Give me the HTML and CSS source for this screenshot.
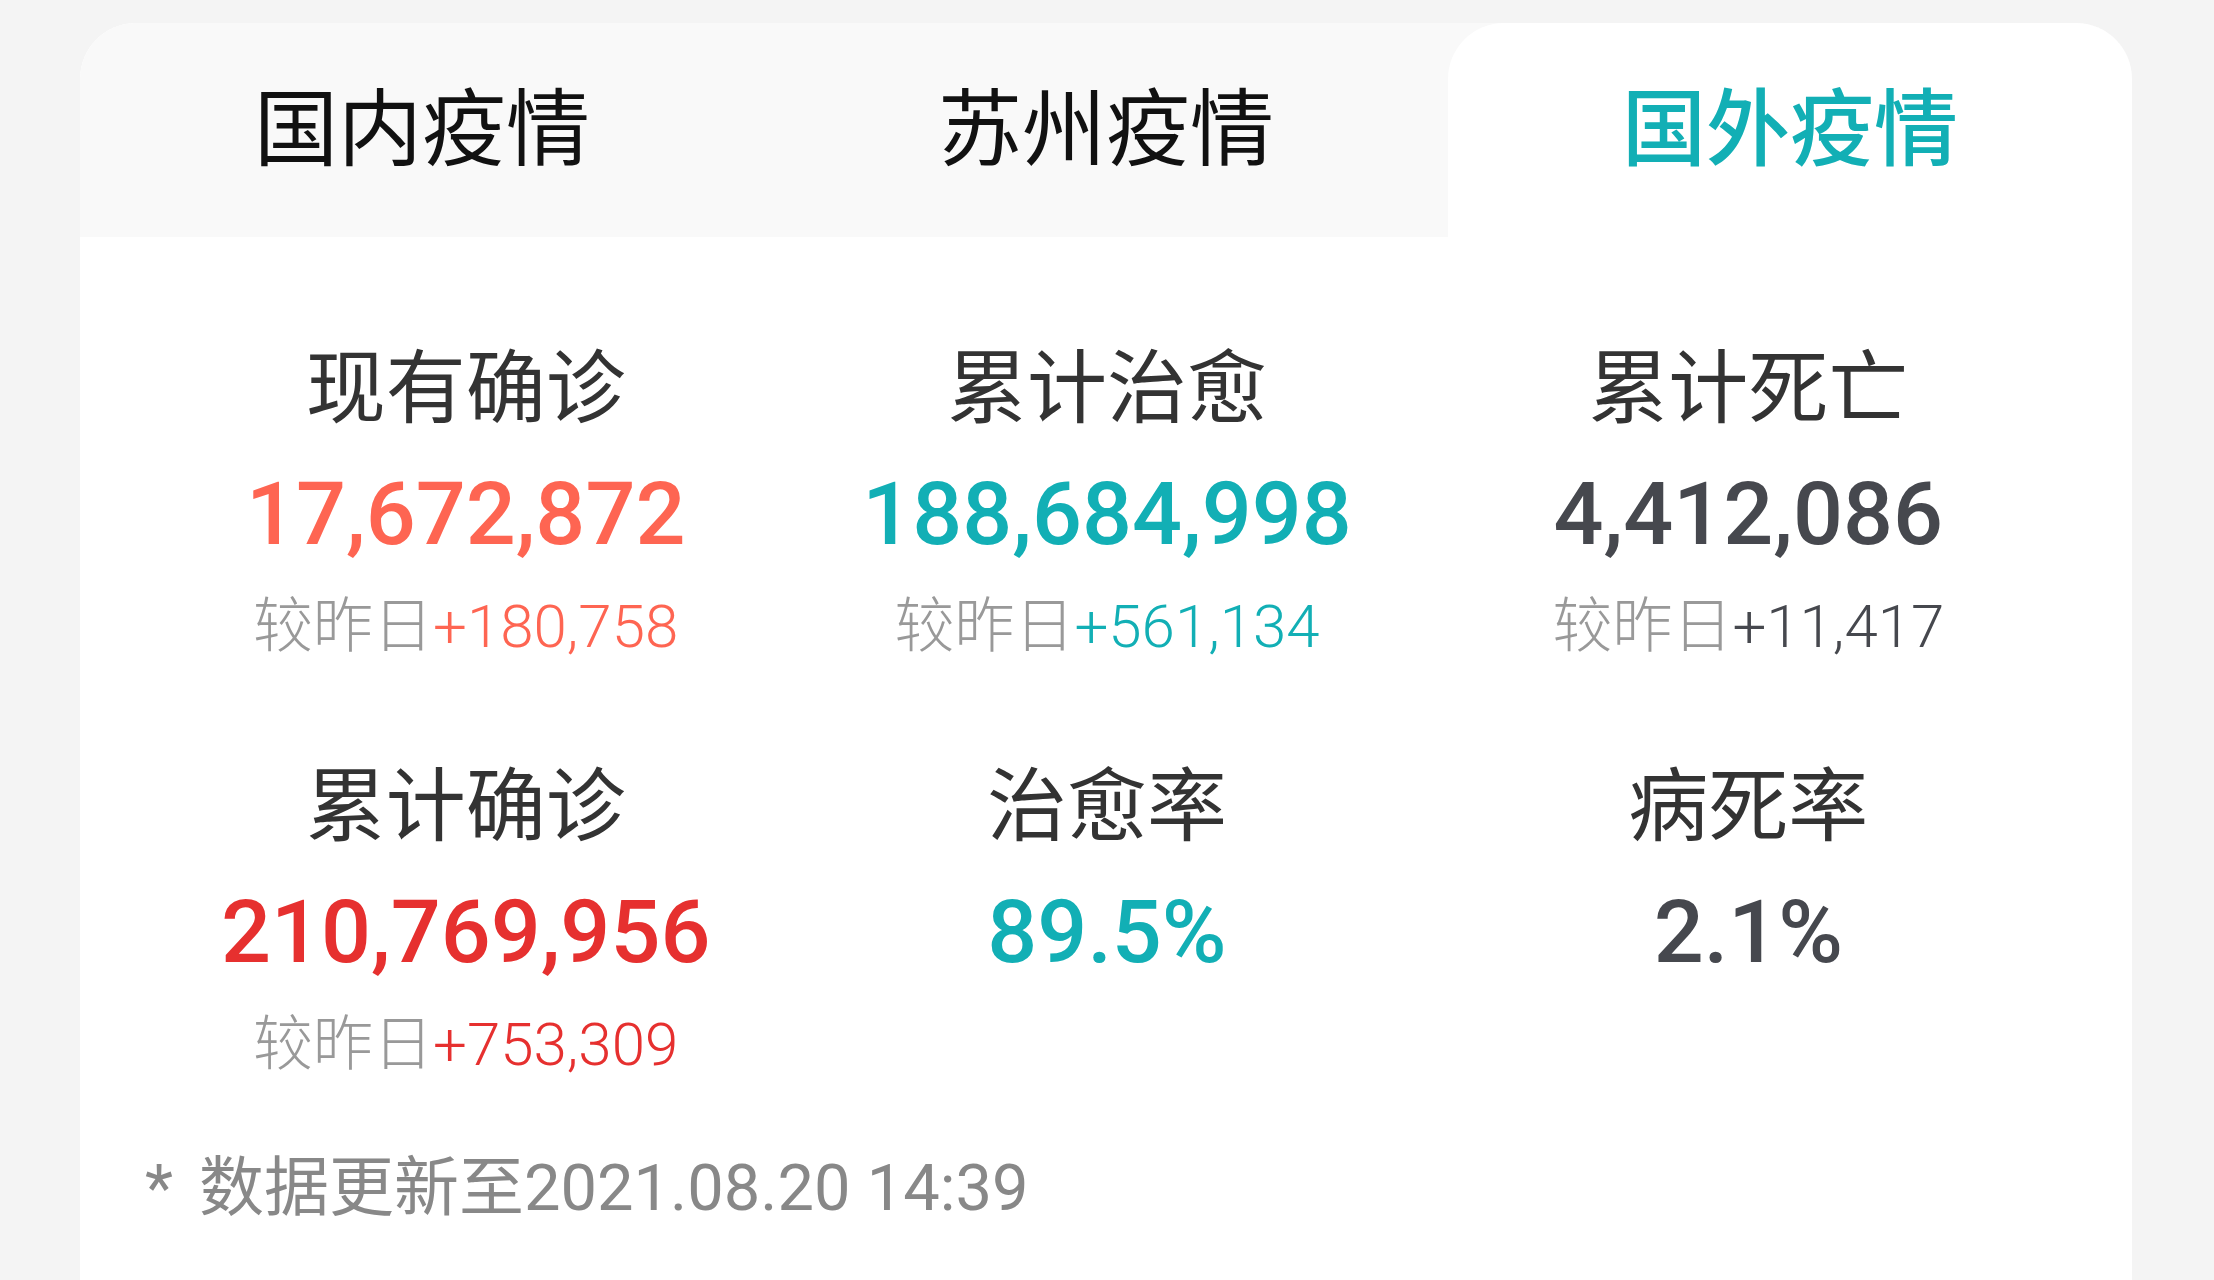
FILE: index.html
```html
<!DOCTYPE html>
<html>
<head>
	<meta charset="utf-8">
	<meta name="viewport" content="width=device-width, initial-scale=1">
	<title>疫情数据</title>
	<link rel="stylesheet" href="styles.css">
</head>
<body>
  <div class="main-div">
    <div class="card">
      <div class="tabs">
        <div class="tab">国内疫情</div>
        <div class="tab">苏州疫情</div>
        <div class="tab active">国外疫情</div>
      </div>

      <div class="stats">

        <div class="stat">
          <div class="label">现有确诊</div>
          <div class="num coral">17,672,872</div>
          <div class="diff">较昨日<span class="coral">+180,758</span></div>
        </div>

        <div class="stat">
          <div class="label">累计治愈</div>
          <div class="num teal">188,684,998</div>
          <div class="diff">较昨日<span class="teal">+561,134</span></div>
        </div>

        <div class="stat">
          <div class="label">累计死亡</div>
          <div class="num dark">4,412,086</div>
          <div class="diff">较昨日<span class="dark">+11,417</span></div>
        </div>

        <div class="stat">
          <div class="label">累计确诊</div>
          <div class="num red">210,769,956</div>
          <div class="diff">较昨日<span class="red">+753,309</span></div>
        </div>

        <div class="stat">
          <div class="label">治愈率</div>
          <div class="num teal">89.5%</div>
        </div>

        <div class="stat">
          <div class="label">病死率</div>
          <div class="num dark">2.1%</div>
        </div>

      </div>

      <div class="update"><span class="star">*</span>数据更新至2021.08.20 14:39</div>
    </div>
  </div>
</body>
</html>
```

FILE: styles.css
```css
 body{
    margin: 0;
    padding: 0;
    box-sizing: border-box;
    font-family: Roboto, "Noto Sans CJK SC", sans-serif;
    background-color: #f4f4f4;
    overflow: hidden;
 }

 .main-div{
   padding: 23px 82px 0 80px;
   height: 1257px;
 }

 .card{
   height: 1400px;
   background-color: #fff;
   border-radius: 56px 56px 0 0;
   overflow: hidden;
 }

 .tabs{
   display: grid;
   grid-template-columns: repeat(3, 1fr);
   height: 214px;
   background-color: #f9f9f9;
 }

 .tab{
   display: flex;
   align-items: center;
   justify-content: center;
   font-family: "Noto Sans CJK SC", sans-serif;
   font-size: 84px;
   color: #111;
   padding-bottom: 16px;
 }

 .tab.active{
   background-color: #fff;
   border-radius: 56px 56px 0 0;
   color: #12afb5;
   font-weight: 500;
 }

 .stats{
   display: grid;
   grid-template-columns: repeat(3, 1fr);
   row-gap: 89px;
   padding: 96px 63px 0 65px;
 }

 .stat{
   display: flex;
   flex-direction: column;
   align-items: center;
 }

 .label{
   font-family: "Noto Sans CJK SC", sans-serif;
   font-size: 80px;
   line-height: 96px;
   color: #333;
 }

 .num{
   margin-top: 33px;
   font-size: 88px;
   line-height: 104px;
   font-weight: 500;
 }

 .diff{
   margin-top: 26px;
   font-size: 60px;
   line-height: 70px;
   font-weight: 300;
   color: #999;
 }

 .coral{ color: #fe6552; }
 .teal{ color: #12afb5; }
 .dark{ color: #46484e; }
 .red{ color: #e6302f; }

 .update{
   margin-top: 70px;
   padding-left: 65px;
   font-size: 65px;
   line-height: 76px;
   color: #888;
 }

 .star{
   margin-right: 26px;
 }
```
